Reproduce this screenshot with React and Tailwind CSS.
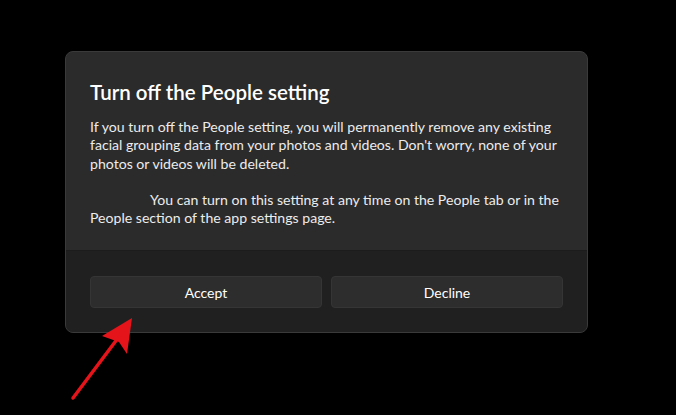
export default function App() {
  return (
    <div
      className="relative w-[676px] h-[415px] bg-black overflow-hidden"
      style={{ fontFamily: 'Lato, "Noto Sans", sans-serif' }}
    >
      <div className="pt-[51px] pl-[65px]">
        <div className="w-[523px] rounded-[8px] border border-[#3a3a3a] overflow-hidden bg-[#2b2b2b]">
          {/* body */}
          <div className="pl-[24px] pr-[20px] pt-[26px] h-[198px]">
            <h2 className="text-[20.5px] leading-[28px] font-semibold text-white">
              Turn off the People setting
            </h2>
            <p className="mt-[12px] text-[14.1px] leading-[18.3px] text-[#ececec] whitespace-pre">
              {"If you turn off the People setting, you will permanently remove any existing\nfacial grouping data from your photos and videos. Don't worry, none of your\nphotos or videos will be deleted.\n\n"}
              <span className="pl-[60px]">You can turn on this setting at any time on the People tab or in the</span>
              {"\nPeople section of the app settings page."}
            </p>
          </div>
          {/* footer */}
          <div className="bg-[#202020] border-t border-[#1c1c1c] px-[24px] pt-[25px] pb-[24px] flex gap-[9px]">
            <button className="flex-1 h-[32px] rounded-[4px] bg-[#2d2d2d] border border-[#353535] text-[14px] text-white">
              Accept
            </button>
            <button className="flex-1 h-[32px] rounded-[4px] bg-[#2d2d2d] border border-[#353535] text-[14px] text-white">
              Decline
            </button>
          </div>
        </div>
      </div>

      {/* red annotation arrow */}
      <svg className="absolute left-0 top-0" width="676" height="415" viewBox="0 0 676 415">
        <line x1="73" y1="398" x2="118" y2="338" stroke="#e5141b" strokeWidth="3.5" strokeLinecap="round" />
        <polygon points="132,318 102,336 119,342 127,354" fill="#e5141b" />
      </svg>
    </div>
  );
}
